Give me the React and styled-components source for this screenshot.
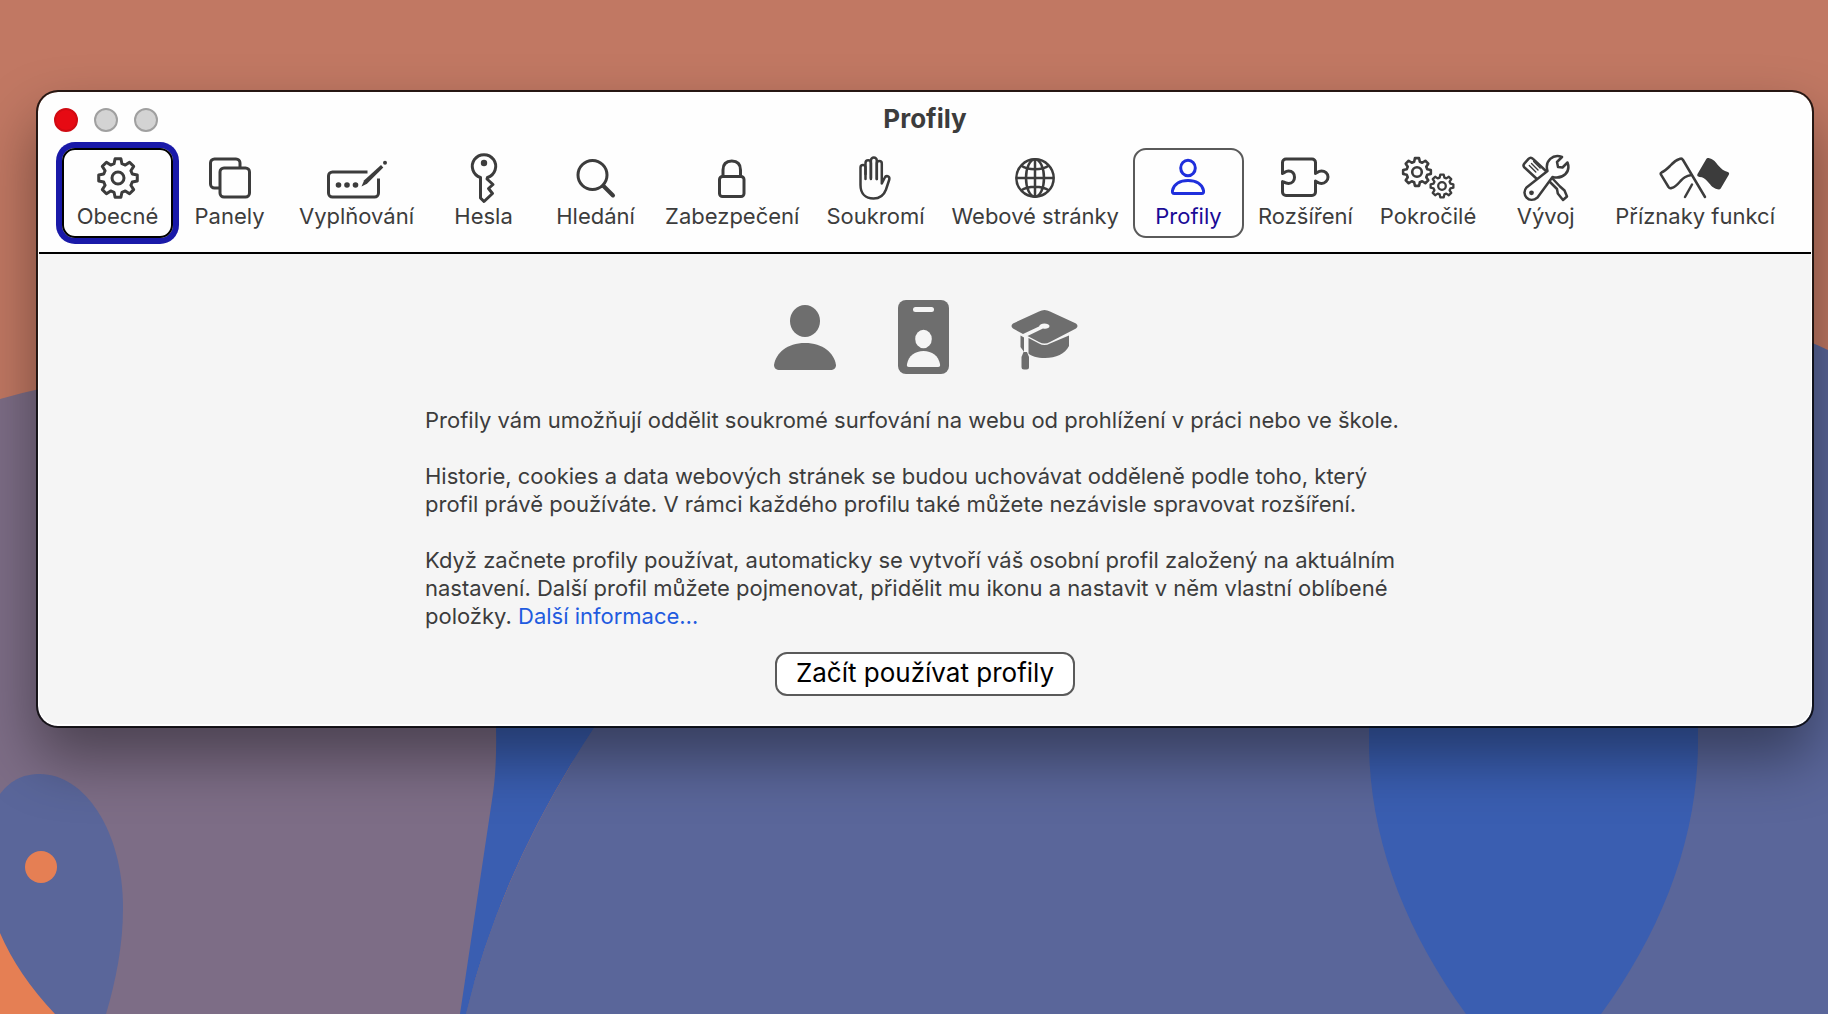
import React from "react";
import styled, { createGlobalStyle, css } from "styled-components";

const GearShape = ({ cx = 0, cy = 0, r = 20, hole = 6, width = 3 }) => {
  const pts = [];
  for (let i = 0; i < 8; i++) {
    const base = (i * Math.PI) / 4 - Math.PI / 2;
    [
      [-0.27, 0.76],
      [-0.15, 1],
      [0.15, 1],
      [0.27, 0.76],
    ].forEach(([a, k]) => {
      pts.push([cx + Math.cos(base + a) * r * k, cy + Math.sin(base + a) * r * k]);
    });
  }
  return (
    <g strokeWidth={width} strokeLinejoin="round">
      <path d={`M${pts.map((p) => `${p[0].toFixed(2)} ${p[1].toFixed(2)}`).join("L")}Z`} />
      <circle cx={cx} cy={cy} r={hole} />
    </g>
  );
};

const icons = {
  gear: (
    <svg width="42" height="48" viewBox="0 0 42 48">
      <GearShape cx={21} cy={24} r={19.5} hole={6} width={3} />
    </svg>
  ),
  tabs: (
    <svg width="42" height="48" viewBox="0 0 42 48">
      <path d="M31 13V9a4 4 0 0 0-4-4H5.500a4 4 0 0 0-4 4v21a4 4 0 0 0 4 4H10" />
      <rect x="11" y="14" width="29.500" height="29" rx="4" />
    </svg>
  ),
  autofill: (
    <svg width="60" height="48" viewBox="0 0 60 48">
      <path d="M40.500 18H5.500a4 4 0 0 0-4 4v17a4 4 0 0 0 4 4h42a4 4 0 0 0 4-4V24.500" />
      <g fill="currentColor" stroke="none">
        <circle cx="11.500" cy="31" r="2.800" />
        <circle cx="20" cy="31" r="2.800" />
        <circle cx="28.500" cy="31" r="2.800" />
        <path d="M34.500 32.500l2.700-6.200L54 11l2.300 2.500L40 29.800z" />
        <circle cx="58" cy="8.800" r="2" />
      </g>
    </svg>
  ),
  key: (
    <svg width="28" height="52" viewBox="0 0 28 52">
      <path
        strokeLinejoin="round"
        d="M10.500 25.500A11.700 11.700 0 1 1 17.500 25.500L17 27l6 5.500-4.500 4 4 5L14 49.500l-3.500-3.500z"
      />
      <circle cx="14" cy="11" r="3.200" fill="currentColor" stroke="none" />
    </svg>
  ),
  search: (
    <svg width="40" height="48" viewBox="0 0 40 48">
      <circle cx="16.500" cy="21" r="14.500" />
      <path strokeWidth="4" strokeLinecap="round" d="M27.500 32L37 41.500" />
    </svg>
  ),
  lock: (
    <svg width="28" height="48" viewBox="0 0 28 48">
      <rect x="1.500" y="22.500" width="24.500" height="20" rx="3" />
      <path d="M5 23V16C5 10 8.500 7 13.800 7S22.500 10 22.500 16v7" />
    </svg>
  ),
  hand: (
    <svg width="32" height="48" viewBox="0 0 32 48">
      <g strokeWidth="2.500" strokeLinecap="round" strokeLinejoin="round">
        <path d="M6.500 25V13.500a2.400 2.400 0 0 0-5 0V31c0 8.500 5 13.500 13 13.500 6.500 0 10.500-3.500 12.500-9l3.300-10c.7-3.500-3.300-4.500-4.600-1.700L22.800 29.500V9.500a2.500 2.500 0 0 0-5 0V25" />
        <path d="M6.500 20V9a2.700 2.700 0 0 1 5.400 0V25" />
        <path d="M11.900 24V6.500a2.900 2.900 0 0 1 5.900 0V25" />
      </g>
    </svg>
  ),
  globe: (
    <svg width="42" height="48" viewBox="0 0 42 48">
      <g strokeWidth="2.500">
        <circle cx="21" cy="24" r="18.700" />
        <ellipse cx="21" cy="24" rx="9" ry="18.700" />
        <path d="M21 5v38M2 24h38M7 11.500c7 5 21 5 28 0M7 36.500c7-5 21-5 28 0" />
      </g>
    </svg>
  ),
  person: (
    <svg width="36" height="48" viewBox="0 0 36 48">
      <ellipse cx="18" cy="14" rx="7.300" ry="7.800" />
      <path
        strokeLinejoin="round"
        d="M4.500 39.500C2.500 39.500 2.200 38.500 2.500 36.500 4 30 10 26.500 18 26.500S32 30 33.500 36.500C33.800 38.500 33.500 39.500 31.500 39.500z"
      />
    </svg>
  ),
  puzzle: (
    <svg width="50" height="48" viewBox="0 0 50 48">
      <path
        strokeLinejoin="round"
        d="M2.500 19.500V8.500a3.500 3.500 0 0 1 3.500-3.500h26a3.500 3.500 0 0 1 3.500 3.500v11c2-1 3-2.500 6-2.500 3.500 0 6.500 2.500 6.500 6s-3 6.500-6.500 6.500c-3 0-4-1.500-6-2.500v11a3.500 3.500 0 0 1-3.500 3.500H6a3.500 3.500 0 0 1-3.500-3.500V27.500c2 1 3.500 2 6 2 4 0 6-3 6-6.300S12.500 17 8.500 17c-2.500 0-4 1.500-6 2.500z"
      />
    </svg>
  ),
  gears: (
    <svg width="54" height="48" viewBox="0 0 54 48">
      <GearShape cx={16} cy={18} r={14} hole={4.8} width={2.6} />
      <GearShape cx={41} cy={32} r={11.5} hole={3.8} width={2.3} />
    </svg>
  ),
  tools: (
    <svg width="48" height="48" viewBox="0 0 48 48">
      <g strokeWidth="2.500" strokeLinejoin="round">
        <path d="M16 26L2.500 13.500q-2-2 0-4.200L6.500 4.800q2.200-2.300 4.500 0L25 18z" />
        <path strokeWidth="1.400" strokeLinecap="round" d="M7.300 11.500l6.500 6.500M9.500 9.500l6.500 6.500M11.700 7.500l6.500 6.500" />
        <path d="M26.500 26.500L35 35l.8 4.500L41 46l4-3.500-2.500-6L38 32.500 30 24" />
        <path
          fill="#fefefe"
          d="M40 3C31-.5 22.500 7 25.500 17L4.500 33.500C-1.500 40 7 50.500 15.500 43.500L30.500 23C41 25.500 49 18 45.500 8.500L40.500 13.500 36 13 35 8z"
        />
        <circle cx="9.500" cy="38.800" r="2.400" fill="currentColor" stroke="none" />
      </g>
    </svg>
  ),
  flags: (
    <svg width="72" height="48" viewBox="0 0 72 48">
      <g strokeWidth="2.500" strokeLinecap="round" strokeLinejoin="round">
        <path d="M46 43L24 6c-.8-1.500-2-1.700-3.500-1-5 1.500-6.500 3.500-9.500 7-3 3-5 5-8.500 6.500-1 .500-1 1.200-.500 2.200L9.500 33c.8 1.200 1.800 1.500 3 1 4-1 6-3.500 9-7 3-3 5-5 11-6" />
        <path d="M26 43l7-12.500" />
      </g>
      <path
        fill="currentColor"
        stroke="none"
        d="M38.500 20L47 5.500c.7-1.200 2-1.700 3.300-1.300 5 1.300 6 3.800 9 7.300 3 3.500 5.500 5.500 9.500 6.500 1.300.400 1.700 1.500 1 2.700L62 34c-.7 1.400-2 1.700-3.500 1.300-5-1.300-6.500-4-9.500-7.300-3-3.500-5-5-8.500-5-2-.3-2.800-1.500-2-3z"
      />
    </svg>
  ),
};

const tabs = [
  { label: "Obecné", icon: "gear", focused: true },
  { label: "Panely", icon: "tabs" },
  { label: "Vyplňování", icon: "autofill" },
  { label: "Hesla", icon: "key" },
  { label: "Hledání", icon: "search" },
  { label: "Zabezpečení", icon: "lock" },
  { label: "Soukromí", icon: "hand" },
  { label: "Webové stránky", icon: "globe" },
  { label: "Profily", icon: "person", selected: true },
  { label: "Rozšíření", icon: "puzzle" },
  { label: "Pokročilé", icon: "gears" },
  { label: "Vývoj", icon: "tools" },
  { label: "Příznaky funkcí", icon: "flags" },
];

const App = () => {
  return (
    <Desktop>
      <GlobalStyle />
      <Wallpaper viewBox="0 0 1828 1014" preserveAspectRatio="xMidYMid slice" aria-hidden="true">
        <rect width="1828" height="1014" fill="#c17863" />
        <path fill="#7d6d86" d="M0 399Q200 340 500 420V1014H0z" />
        <path fill="#5a669a" d="M600 700Q900 300 1500 290Q1750 310 1828 350V1014H460z" />
        <path fill="#3a5eb1" d="M496 700V728Q497 770 492 800L460 1014H466Q500 870 594 728L620 690z" />
        <path fill="#5a669a" d="M594 728L640 650H900V1014H466Q500 870 594 728z" />
        <path fill="#3a5eb1" d="M1369 700V745C1370 840 1405 930 1466 1014H1601C1662 930 1697 840 1698 745V700z" />
        <path fill="#5a669a" d="M0 794C12 778 26 774 40 774C84 774 123 830 123 908C123 945 116 980 106 1014H0z" />
        <path fill="#e57f54" d="M0 933Q18 975 55 1014H0z" />
        <circle cx="41" cy="867" r="16" fill="#e57f54" />
      </Wallpaper>
      <Window>
        <Header>
          <TitleBar>
            <Lights>
              <Light type="button" $close aria-label="Zavřít" />
              <Light type="button" aria-label="Minimalizovat" />
              <Light type="button" aria-label="Zvětšit" />
            </Lights>
            <Title>Profily</Title>
          </TitleBar>
          <Toolbar>
            {tabs.map((tab) => (
              <Tab key={tab.label} type="button" $selected={tab.selected} $focused={tab.focused}>
                <TabIcon $selected={tab.selected}>{icons[tab.icon]}</TabIcon>
                <span>{tab.label}</span>
              </Tab>
            ))}
          </Toolbar>
        </Header>
        <Content>
          <ProfileIcons>
            <svg width="64" height="74" viewBox="-2 0 64 74">
              <ellipse cx="31" cy="21" rx="15" ry="16" />
              <path d="M6 70C2 70 0 68 0 65 2 53 13 43 31 43S60 53 62 65C62 68 60 70 56 70z" />
            </svg>
            <svg width="51" height="74" viewBox="0 0 51 74">
              <rect width="51" height="74" rx="8" />
              <g fill="#f5f5f5">
                <rect x="15" y="7" width="21" height="5" rx="2.500" />
                <ellipse cx="25.500" cy="39" rx="8.300" ry="9.300" />
                <path d="M11 67c-2 0-2.300-1-2-3C10.500 56 17 51 25.500 51S40.500 56 42 64c.3 2 0 3-2 3z" />
              </g>
            </svg>
            <svg width="67" height="74" viewBox="0 0 67 74">
              <path d="M2 23.500L28 11.500Q33.500 8.500 39 11.500L65 23.500Q68 26 65 28.500L39 42Q33.500 45 28 42L16.500 36 32 28.500C35 29 38.500 28.500 38.500 26 38.500 23 29 22 28 26.500L12 34 2 28.500Q-1 26 2 23.500z" />
              <path d="M17.500 38L28 43.500Q33.500 46.500 39 43.500L58 35.500V46C54 54 45 58 34 58 26 58 20 56 17.500 53.500z" />
              <path d="M9.500 35.500L13 37.500V52L9.500 47z" />
              <path d="M12.500 52h3.500l2 5v10q0 2.500-2.500 2.500h-2.500q-2.500 0-2.500-2.500V57z" />
            </svg>
          </ProfileIcons>
          <Description>
            <p>Profily vám umožňují oddělit soukromé surfování na webu od prohlížení v práci nebo ve škole.</p>
            <p>
              Historie, cookies a data webových stránek se budou uchovávat odděleně podle toho, který
              profil právě používáte. V rámci každého profilu také můžete nezávisle spravovat rozšíření.
            </p>
            <p>
              Když začnete profily používat, automaticky se vytvoří váš osobní profil založený na aktuálním
              nastavení. Další profil můžete pojmenovat, přidělit mu ikonu a nastavit v něm vlastní oblíbené
              položky. <a href="#info">Další informace…</a>
            </p>
          </Description>
          <StartButton type="button">Začít používat profily</StartButton>
        </Content>
      </Window>
    </Desktop>
  );
};

const GlobalStyle = createGlobalStyle`
  body {
    margin: 0;
    font-family: Inter, "Liberation Sans", sans-serif;
  }
  button {
    font-family: inherit;
  }
`;

const Desktop = styled.div`
  position: relative;
  min-height: 100vh;
  box-sizing: border-box;
  padding: 90px 14px 90px 36px;
  overflow: hidden;
`;

const Wallpaper = styled.svg`
  position: absolute;
  top: 0;
  left: 0;
  width: 100%;
  height: 100%;
`;

const Window = styled.main`
  position: relative;
  box-sizing: border-box;
  border: 2px solid rgba(0, 0, 0, 0.8);
  border-radius: 22px;
  background: #fefefe;
  background-clip: padding-box;
  box-shadow: 0 30px 60px rgba(0, 0, 0, 0.4);
  padding: 0 1px 2px;
`;

const Header = styled.header`
  border-bottom: 2px solid #000;
  padding-bottom: 14px;
`;

const TitleBar = styled.div`
  display: grid;
  grid-template-columns: 1fr auto 1fr;
  align-items: center;
  height: 56px;
  padding: 0 15px;
`;

const Lights = styled.div`
  display: flex;
  gap: 16px;
`;

const Light = styled.button`
  width: 24px;
  height: 24px;
  box-sizing: border-box;
  padding: 0;
  border: 2px solid #a0a0a0;
  border-radius: 50%;
  background: #d3d3d3;
  ${({ $close }) =>
    $close &&
    css`
      border-color: #d00a12;
      background: #e60a13;
    `}
`;

const Title = styled.h1`
  margin: 0;
  padding-bottom: 2px;
  font-size: 26px;
  line-height: 30px;
  font-weight: 700;
  color: #3c3c3c;
`;

const Toolbar = styled.nav`
  display: flex;
  justify-content: center;
  gap: 1px;
`;

const Tab = styled.button`
  display: flex;
  flex-direction: column;
  align-items: center;
  box-sizing: border-box;
  min-width: 111px;
  height: 90px;
  padding: 3px 11px 0;
  border: 2px solid transparent;
  border-radius: 13px;
  background: none;
  color: #3c3c3c;
  font-size: 22px;
  line-height: 26px;
  white-space: nowrap;
  ${({ $selected }) =>
    $selected &&
    css`
      border-color: #5a5a5a;
      color: #1a0a96;
    `}
  ${({ $focused }) =>
    $focused &&
    css`
      border-color: #000;
      box-shadow: 0 0 0 6px #1919a8;
    `}
`;

const TabIcon = styled.span`
  display: flex;
  align-items: center;
  height: 50px;
  color: ${({ $selected }) => ($selected ? "#1f2fdc" : "inherit")};
  svg {
    fill: none;
    stroke: currentColor;
    stroke-width: 3;
    overflow: visible;
  }
`;

const Content = styled.section`
  display: flex;
  flex-direction: column;
  align-items: center;
  padding: 46px 20px 28px;
  border-radius: 0 0 19px 19px;
  background: #f5f5f5;
`;

const ProfileIcons = styled.div`
  display: flex;
  gap: 62px;
  fill: #6e6e6e;
  svg {
    overflow: visible;
  }
`;

const Description = styled.div`
  width: 100%;
  max-width: 1000px;
  margin: 32px 0 22px;
  color: #3c3c3c;
  font-size: 22px;
  line-height: 28px;
  p {
    margin: 0;
  }
  p + p {
    margin-top: 28px;
  }
  a {
    color: #1f5bdf;
    text-decoration: none;
  }
`;

const StartButton = styled.button`
  box-sizing: border-box;
  height: 44px;
  padding: 0 19px 2px;
  border: 2px solid #5a5a5a;
  border-radius: 12px;
  background: #fff;
  color: #000;
  font-size: 26px;
  line-height: 30px;
`;

export default App;
